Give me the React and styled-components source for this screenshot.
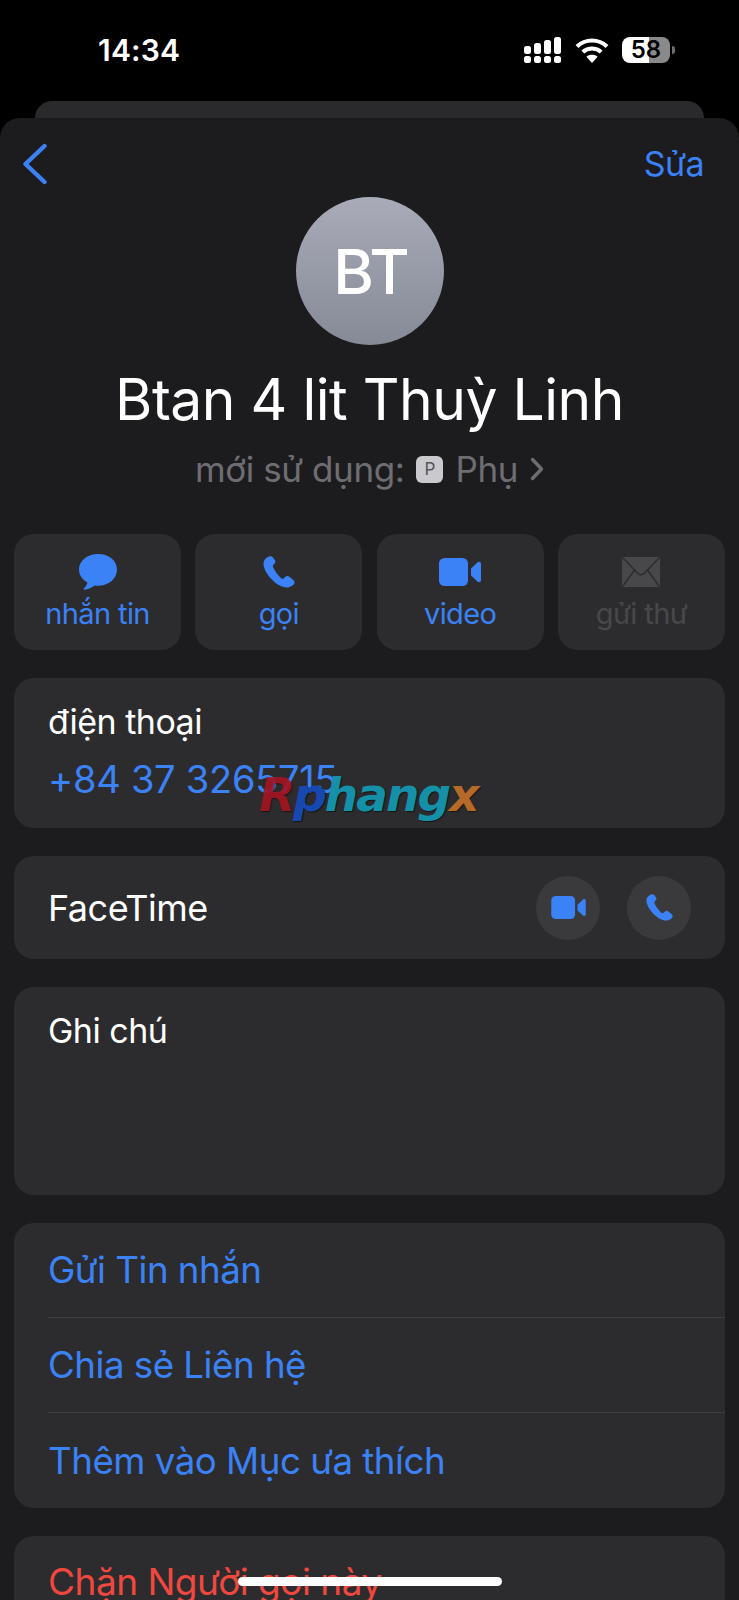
import React from "react";
import styled, { createGlobalStyle } from "styled-components";

const BLUE = "#3b82f6";

const GlobalStyle = createGlobalStyle`
  html, body {
    margin: 0;
    padding: 0;
    background: #000;
  }
  * {
    box-sizing: border-box;
  }
`;

const Screen = styled.div`
  position: relative;
  width: 739px;
  height: 1600px;
  overflow: hidden;
  background: #000;
  color: #fff;
  font-family: Inter, "Noto Sans", sans-serif;
`;

// status bar
const StatusBar = styled.div`
  height: 101px;
  display: flex;
  justify-content: space-between;
  align-items: flex-start;
  padding: 32px 69px 0 98px;
`;

const Time = styled.div`
  font-size: 30px;
  line-height: 36px;
  font-weight: 600;
  letter-spacing: 0.2px;
`;

const StatusIcons = styled.div`
  display: flex;
  align-items: center;
  gap: 13px;
  margin-top: 5px;
`;

const Battery = styled.div`
  position: relative;
  width: 48px;
  height: 26px;
  border-radius: 8px;
  background: linear-gradient(90deg, #fff 0 56%, #8a8a8a 56% 100%);
  color: #000;
  font-size: 24px;
  line-height: 26px;
  font-weight: 600;
  text-align: center;

  &::after {
    content: "";
    position: absolute;
    right: -5px;
    top: 9px;
    width: 3px;
    height: 8px;
    border-radius: 0 3px 3px 0;
    background: #6f6f6f;
  }
`;

// sheets
const BackSheet = styled.div`
  height: 17px;
  margin: 0 35px;
  background: #2a2a2c;
  border-radius: 18px 18px 0 0;
`;

const Sheet = styled.div`
  background: #1c1c1e;
  border-radius: 20px 20px 0 0;
  height: 1482px;
  padding: 0 14px;
`;

const NavBar = styled.div`
  height: 79px;
  display: flex;
  justify-content: space-between;
  align-items: center;
  padding: 12px 21px 0 8px;
`;

const EditLink = styled.span`
  color: ${BLUE};
  font-size: 34px;
  letter-spacing: -0.6px;
`;

const Profile = styled.div`
  display: flex;
  flex-direction: column;
  align-items: center;
`;

const Avatar = styled.div`
  width: 148px;
  height: 148px;
  border-radius: 50%;
  background: linear-gradient(180deg, #a9acb8 0%, #858a96 100%);
  display: flex;
  align-items: center;
  justify-content: center;
  font-size: 62px;
  font-weight: 500;
  letter-spacing: -1px;
  padding-left: 3px;
`;

const Name = styled.div`
  margin-top: 19px;
  font-size: 57px;
  line-height: 72px;
  letter-spacing: -0.5px;
`;

const Subtitle = styled.div`
  margin-top: 12px;
  display: flex;
  align-items: center;
  gap: 12px;
  color: #6e6e72;
  font-size: 35px;
  line-height: 42px;
  letter-spacing: -0.4px;
`;

const LabelBadge = styled.span`
  width: 27px;
  height: 27px;
  border-radius: 6px;
  background: #c9c9ce;
  color: #55555a;
  font-size: 17px;
  line-height: 27px;
  text-align: center;
  letter-spacing: 0;
`;

const ActionGrid = styled.div`
  margin-top: 44px;
  display: grid;
  grid-template-columns: repeat(4, 167px);
  justify-content: space-between;
`;

const ActionButton = styled.div`
  height: 116px;
  background: #2c2c2e;
  border-radius: 20px;
  display: flex;
  flex-direction: column;
  align-items: center;
  padding-top: 20px;
  color: ${(p) => (p.$disabled ? "#48484a" : BLUE)};
`;

const ActionIcon = styled.div`
  height: 36px;
  display: flex;
  align-items: center;
  justify-content: center;
`;

const ActionLabel = styled.div`
  margin-top: 6px;
  font-size: 29px;
  line-height: 36px;
  letter-spacing: -0.6px;
`;

const Card = styled.div`
  margin-top: ${(p) => p.$gap || 28}px;
  background: #2c2c2e;
  border-radius: 20px;
  height: ${(p) => (p.$height ? `${p.$height}px` : "auto")};
  padding: ${(p) => p.$padding || "0 0 0 34px"};
`;

const BodyText = styled.div`
  font-size: ${(p) => p.$size || 34}px;
  line-height: 40px;
  letter-spacing: -0.5px;
  color: ${(p) => p.$color || "#fff"};
`;

const PhoneNumber = styled(BodyText)`
  margin-top: 17px;
  letter-spacing: -0.25px;
`;

const FaceTimeRow = styled(Card)`
  display: flex;
  align-items: center;
  justify-content: space-between;
`;

const RoundButtons = styled.div`
  display: flex;
  gap: 27px;
  margin-right: 34px;
`;

const RoundButton = styled.div`
  width: 64px;
  height: 64px;
  border-radius: 50%;
  background: #3a3a3c;
  display: flex;
  align-items: center;
  justify-content: center;
  color: ${BLUE};
`;

const ActionRow = styled.div`
  height: 95px;
  display: flex;
  align-items: center;
  border-bottom: ${(p) => (p.$last ? "none" : "1px solid #3f3f41")};
`;

const BlockRow = styled.div`
  padding-top: 24px;
  font-size: 37px;
  line-height: 44px;
  letter-spacing: -0.5px;
  color: #f0483e;
`;

// overlays
const Watermark = styled.div`
  position: absolute;
  left: 259px;
  top: 768px;
  font-family: "DejaVu Sans", sans-serif;
  font-size: 47px;
  line-height: 54px;
  font-weight: 700;
  font-style: italic;
  letter-spacing: -2px;
  color: #1490a8;
  text-shadow: 1px 1px 1px rgba(0, 0, 0, 0.5);
`;

const WatermarkR = styled.span`
  color: rgba(176, 22, 36, 0.85);
`;

const WatermarkP = styled.span`
  color: #1747b0;
`;

const WatermarkX = styled.span`
  color: #b56a28;
`;

const HomeIndicator = styled.div`
  position: absolute;
  left: 238px;
  bottom: 14px;
  width: 264px;
  height: 9px;
  border-radius: 5px;
  background: #fff;
`;

const SignalIcon = () => (
  <svg width="38" height="26" viewBox="0 0 38 26" fill="#fff">
    <rect x="0" y="9" width="7" height="8" rx="2.5" />
    <rect x="10" y="6" width="7" height="11" rx="2.5" />
    <rect x="20" y="3" width="7" height="14" rx="2.5" />
    <rect x="30" y="0" width="7" height="17" rx="2.5" />
    <rect x="0" y="19" width="7" height="7" rx="2.5" />
    <rect x="10" y="19" width="7" height="7" rx="2.5" />
    <rect x="20" y="19" width="7" height="7" rx="2.5" />
    <rect x="30" y="19" width="7" height="7" rx="2.5" />
  </svg>
);

const WifiIcon = () => (
  <svg width="34" height="25" viewBox="0 0 34 25" fill="none" stroke="#fff" strokeWidth="4.2">
    <path d="M2 8.5C10.5 .5 23.5 .5 32 8.5" />
    <path d="M7.8 14C13 9.3 21 9.3 26.2 14" />
    <path d="M17 25l-5.6-6.2c3.2-2.6 8-2.6 11.2 0z" fill="#fff" stroke="none" />
  </svg>
);

const BackIcon = () => (
  <svg width="26" height="42" viewBox="0 0 26 42" fill="none" stroke={BLUE} strokeWidth="4.4" strokeLinecap="round" strokeLinejoin="round">
    <path d="M22.5 3L3.5 21l19 18" />
  </svg>
);

const ChevronIcon = () => (
  <svg width="14" height="24" viewBox="0 0 14 24" fill="none" stroke="#6e6e72" strokeWidth="3.4" strokeLinecap="round" strokeLinejoin="round">
    <path d="M2.5 2.5L11.5 12l-9 9.5" />
  </svg>
);

const MessageIcon = () => (
  <svg width="38" height="36" viewBox="0 0 38 36" fill="currentColor">
    <path d="M19 0C8.500 0 0 6.800 0 15.500c0 5.400 3.300 10.200 8.400 13-.4 2.300-2 4.700-3.500 6-.5.500-.2 1.400.6 1.300 3.500-.4 7.600-2 10.100-4.200.9.100 2.300.2 3.400.2 10.500 0 19-7 19-16.300S29.500 0 19 0z" />
  </svg>
);

const PhoneIcon = ({ size = 32 }) => (
  <svg width={size} height={size} viewBox="0 0 32 32" fill="currentColor">
    <path d="M6 .5C4 1 .5 3.500.5 8c0 8 12.500 23.500 23.500 23.500 3.500 0 7-2.500 7.500-4.500.3-1.500-.5-2.500-1.500-3.300l-4-3.200c-1-.8-2.400-.8-3.400.1l-1.800 1.700c-.8.700-1.800.7-2.600 0C15 19.500 11.500 14.500 10 11c-.3-1-.1-1.700.5-2.300l1.300-1.500c.7-.8.8-1.900.3-2.800L10 1.500C9 .3 7.500.1 6 .5z" />
  </svg>
);

const VideoIcon = ({ width = 42, height = 28 }) => (
  <svg width={width} height={height} viewBox="0 0 42 28" fill="currentColor">
    <rect x="0" y="0" width="29" height="28" rx="5.500" />
    <path d="M32 10.500l6.700-6.300c1.300-1.100 3.300-.2 3.300 1.500v16.600c0 1.700-2 2.600-3.300 1.500L32 17.500z" />
  </svg>
);

const MailIcon = () => (
  <svg width="38" height="30" viewBox="0 0 38 30">
    <rect x="0" y="0" width="38" height="30" rx="2.500" fill="#48484a" />
    <path d="M1 1l15 15.500c1.700 1.700 4.300 1.700 6 0L37 1M1 29l11.500-16M37 29L25.500 13" fill="none" stroke="#2c2c2e" strokeWidth="1.500" />
  </svg>
);

const actions = [
  { label: "nhắn tin", icon: <MessageIcon /> },
  { label: "gọi", icon: <PhoneIcon /> },
  { label: "video", icon: <VideoIcon /> },
  { label: "gửi thư", icon: <MailIcon />, disabled: true },
];

const links = ["Gửi Tin nhắn", "Chia sẻ Liên hệ", "Thêm vào Mục ưa thích"];

export default function App() {
  return (
    <Screen>
      <GlobalStyle />
      <StatusBar>
        <Time>14:34</Time>
        <StatusIcons>
          <SignalIcon />
          <WifiIcon />
          <Battery>58</Battery>
        </StatusIcons>
      </StatusBar>
      <BackSheet />
      <Sheet>
        <NavBar>
          <BackIcon />
          <EditLink>Sửa</EditLink>
        </NavBar>
        <Profile>
          <Avatar>BT</Avatar>
          <Name>Btan 4 lit Thuỳ Linh</Name>
          <Subtitle>
            mới sử dụng:
            <LabelBadge>P</LabelBadge>
            Phụ
            <ChevronIcon />
          </Subtitle>
        </Profile>
        <ActionGrid>
          {actions.map((a) => (
            <ActionButton key={a.label} $disabled={a.disabled}>
              <ActionIcon>{a.icon}</ActionIcon>
              <ActionLabel>{a.label}</ActionLabel>
            </ActionButton>
          ))}
        </ActionGrid>
        <Card $height={150} $padding="24px 0 0 34px">
          <BodyText>điện thoại</BodyText>
          <PhoneNumber $size={38} $color={BLUE}>+84 37 3265715</PhoneNumber>
        </Card>
        <FaceTimeRow $height={103}>
          <BodyText $size={36}>FaceTime</BodyText>
          <RoundButtons>
            <RoundButton>
              <VideoIcon width={35} height={23} />
            </RoundButton>
            <RoundButton>
              <PhoneIcon size={27} />
            </RoundButton>
          </RoundButtons>
        </FaceTimeRow>
        <Card $height={208} $padding="24px 0 0 34px">
          <BodyText>Ghi chú</BodyText>
        </Card>
        <Card>
          {links.map((text, i) => (
            <ActionRow key={text} $last={i === links.length - 1}>
              <BodyText $size={36.7} $color={BLUE}>{text}</BodyText>
            </ActionRow>
          ))}
        </Card>
        <Card $height={120}>
          <BlockRow>Chặn Người gọi này</BlockRow>
        </Card>
      </Sheet>
      <Watermark>
        <WatermarkR>R</WatermarkR>
        <WatermarkP>p</WatermarkP>
        hang
        <WatermarkX>x</WatermarkX>
      </Watermark>
      <HomeIndicator />
    </Screen>
  );
}
